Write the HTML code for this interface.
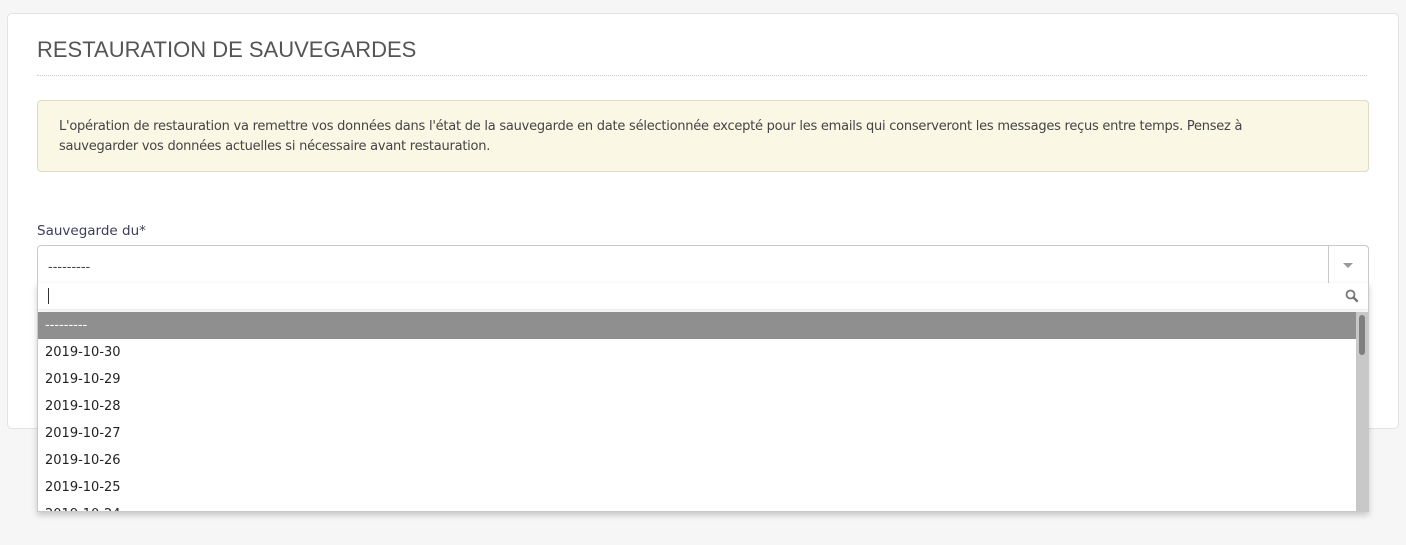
<!DOCTYPE html>
<html><head><style>
body{margin:0;background:#f6f6f6;width:1406px;height:545px;position:relative;overflow:hidden;font-family:"DejaVu Sans","Liberation Sans",sans-serif;}
.card{position:absolute;left:7px;top:13px;width:1390px;height:414px;background:#fff;border:1px solid #e3e3e3;border-radius:5px;}
.title{position:absolute;left:37px;top:37px;font-size:22px;color:#555;font-family:"Liberation Sans",sans-serif;letter-spacing:0px;}
.hr{position:absolute;left:37px;top:75px;width:1330px;border-top:1px dotted #ccc;}
.alert{position:absolute;left:37px;top:100px;width:1330px;height:70px;background:#faf7e4;border:1px solid #dedbc4;border-radius:4px;}
.alert p{margin:0;position:absolute;left:21px;top:16px;font-size:13px;line-height:20px;color:#444;white-space:nowrap;letter-spacing:-0.24px;}
.label{position:absolute;left:37px;top:223px;font-size:13.5px;color:#3d3d5c;}
.sel{position:absolute;left:37px;top:245px;width:1330px;height:37px;border:1px solid #c9c9c9;border-radius:4px 4px 0 0;background:#fff;}
.sel span{position:absolute;left:10px;top:14px;font-size:13px;color:#444;}
.sel .div{position:absolute;left:1290px;top:0;width:1px;height:37px;background:#c9c9c9;}
.sel .arr{position:absolute;left:1305px;top:17px;width:0;height:0;border-left:5px solid transparent;border-right:5px solid transparent;border-top:5px solid #999;}
.dd{position:absolute;left:37px;top:283px;width:1330px;height:228px;border:1px solid #c9c9c9;border-top:none;background:#fff;box-shadow:0 3px 6px rgba(0,0,0,.2);overflow:hidden;}
.search{position:absolute;left:0;top:0;width:1330px;height:26px;border-bottom:1px solid #eee;box-shadow:0 2px 3px rgba(0,0,0,.06);}
.caret{position:absolute;left:10px;top:5px;width:1px;height:16px;background:#333;}
.list{position:absolute;left:0;top:29px;width:1318px;}
.row{height:27px;line-height:27px;padding-left:7px;font-size:13px;color:#222;}
.row.h{background:#8f8f8f;color:#fff;}
.sb{position:absolute;left:1318px;top:29px;width:12px;height:200px;background:#c8c8c8;}
.th{position:absolute;left:3px;top:3px;width:6px;height:40px;background:#7f7f7f;border-radius:3px;}
</style></head><body>
<div class="card"></div>
<div class="title">RESTAURATION DE SAUVEGARDES</div>
<div class="hr"></div>
<div class="alert"><p>L'opération de restauration va remettre vos données dans l'état de la sauvegarde en date sélectionnée excepté pour les emails qui conserveront les messages reçus entre temps. Pensez à<br>sauvegarder vos données actuelles si nécessaire avant restauration.</p></div>
<div class="label">Sauvegarde du*</div>
<div class="sel"><span>---------</span><div class="div"></div><div class="arr"></div></div>
<div class="dd">
<div class="search"><div class="caret"></div>
<svg style="position:absolute;left:1307px;top:6px" width="14" height="14" viewBox="0 0 14 14"><circle cx="5.5" cy="5.5" r="4" fill="none" stroke="#777" stroke-width="1.8"/><path d="M8.5 8.5L12 12" stroke="#777" stroke-width="2.4" stroke-linecap="round"/></svg>
</div>
<div class="list">
<div class="row h">---------</div>
<div class="row">2019-10-30</div>
<div class="row">2019-10-29</div>
<div class="row">2019-10-28</div>
<div class="row">2019-10-27</div>
<div class="row">2019-10-26</div>
<div class="row">2019-10-25</div>
<div class="row">2019-10-24</div>
</div>
<div class="sb"><div class="th"></div></div>
</div>
</body></html>
